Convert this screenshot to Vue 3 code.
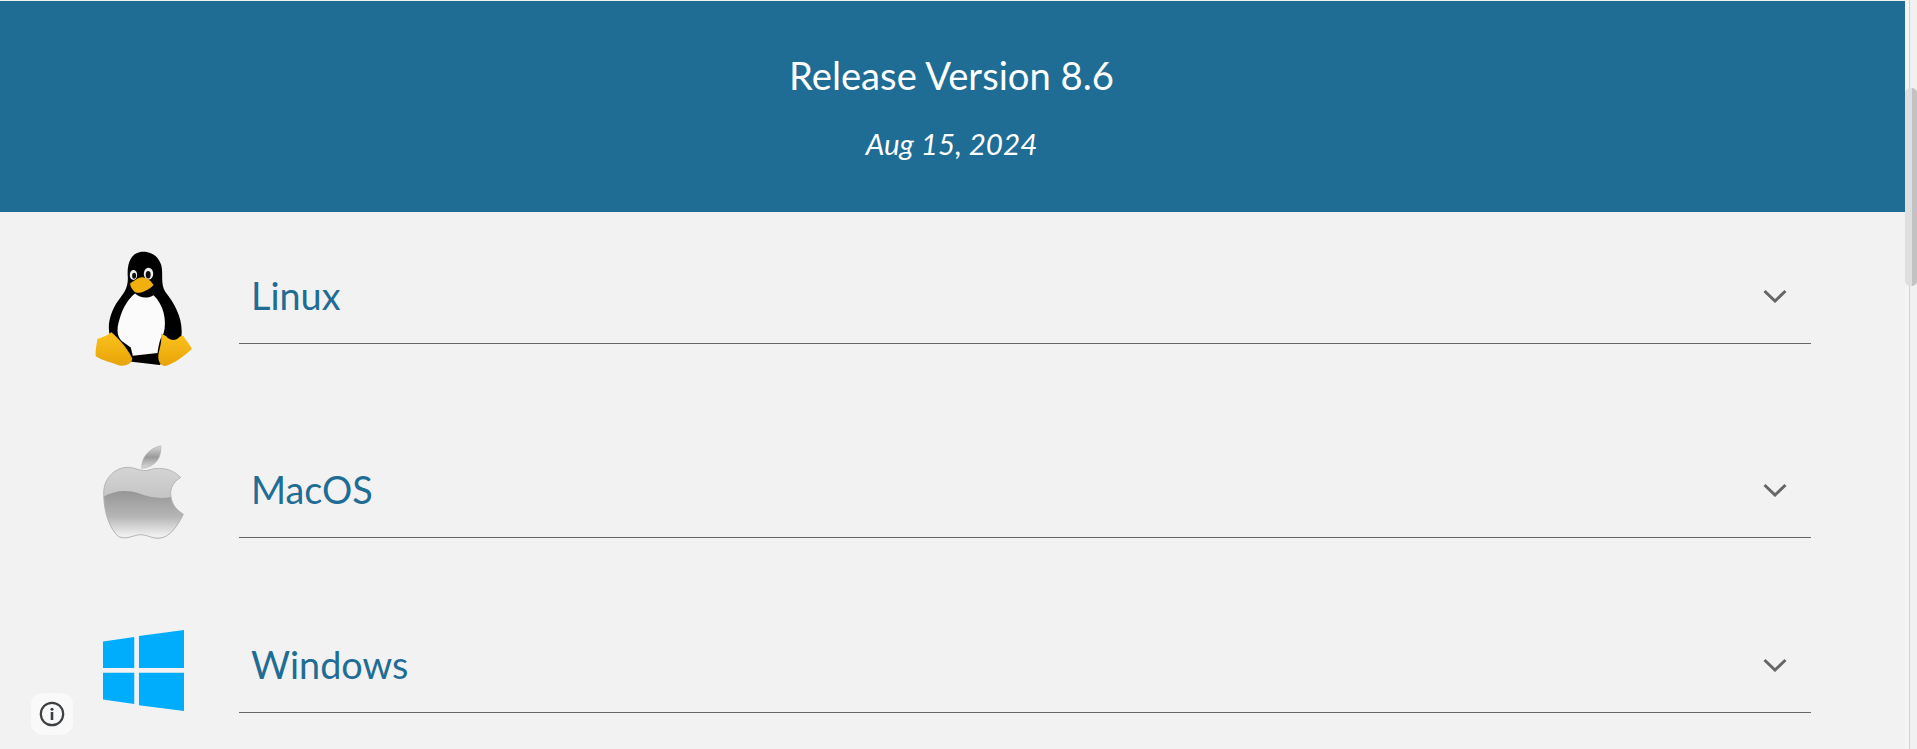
<script setup>
const rows = [
  { name: 'Linux', cls: 'linux' },
  { name: 'MacOS', cls: 'mac' },
  { name: 'Windows', cls: 'win' },
]
</script>

<template>
  <div class="viewport">
    <main class="page">
      <header class="banner">
        <h1 class="title">Release Version 8.6</h1>
        <p class="date">Aug 15, 2024</p>
      </header>

      <section v-for="row in rows" :key="row.name" class="row" :class="row.cls">
        <div class="icon-cell">
          <svg v-if="row.cls === 'linux'" class="tux" viewBox="45 60 290 350" width="97" height="117">
            <defs>
              <filter id="soft" x="-5%" y="-5%" width="110%" height="110%">
                <feGaussianBlur stdDeviation="1.6"/>
              </filter>
              <linearGradient id="foot" x1="0" y1="0" x2="0" y2="1">
                <stop offset="0" stop-color="#fbc21a"/>
                <stop offset="1" stop-color="#e8a40a"/>
              </linearGradient>
            </defs>
            <g filter="url(#soft)">
              <path d="M190 65C152 65 140 100 143 140C145 175 130 190 112 215C92 245 82 280 88 310C100 350 130 385 155 394L238 404C265 385 295 350 303 322C310 270 287 225 255 185C240 160 250 130 243 105C235 80 215 65 190 65Z" fill="#060606"/>
              <path d="M165 190C150 200 128 230 118 268C108 300 112 320 125 332L152 352L158 376L232 368C236 340 240 322 250 310C262 270 248 220 220 195C205 205 180 205 165 190Z" fill="#fbfbfb"/>
              <ellipse cx="160" cy="135" rx="11" ry="15" fill="#efefef"/>
              <ellipse cx="205" cy="131" rx="14" ry="18" fill="#efefef"/>
              <ellipse cx="162" cy="137" rx="6" ry="9" fill="#111"/>
              <ellipse cx="204" cy="134" rx="7.5" ry="11" fill="#111"/>
              <path d="M150 160C165 152 175 140 190 142C205 145 215 155 220 165C205 180 185 190 170 188C160 185 150 170 150 160Z" fill="#f0b00c"/>
              <path d="M52 326C66 322 82 316 94 306C110 320 142 352 156 384C158 400 132 410 115 405C95 396 68 392 47 378C45 362 50 342 52 326Z" fill="url(#foot)"/>
              <path d="M242 310L258 318C268 332 288 332 296 322C302 316 306 316 310 318C318 332 330 344 335 356C312 376 282 400 255 407C240 406 232 392 235 370C240 350 246 330 242 310Z" fill="url(#foot)"/>
            </g>
          </svg>

          <svg v-else-if="row.cls === 'mac'" class="apple" viewBox="68 45 244 285" width="81" height="95">
            <defs>
              <linearGradient id="appleTop" x1="0" y1="0" x2="0" y2="1">
                <stop offset="0" stop-color="#d4d4d4"/>
                <stop offset="0.45" stop-color="#c4c4c4"/>
              </linearGradient>
              <linearGradient id="appleBottom" x1="0" y1="0" x2="0" y2="1">
                <stop offset="0" stop-color="#969696"/>
                <stop offset="0.5" stop-color="#b6b6b6"/>
                <stop offset="0.85" stop-color="#efefef"/>
                <stop offset="1" stop-color="#e8e8e8"/>
              </linearGradient>
              <linearGradient id="appleLeaf" x1="0" y1="0" x2="0" y2="1">
                <stop offset="0" stop-color="#d8d8d8"/>
                <stop offset="0.5" stop-color="#9a9a9a"/>
                <stop offset="1" stop-color="#dcdcdc"/>
              </linearGradient>
              <clipPath id="appleClip">
                <path d="M70 190C70 140 110 108 150 112C170 115 185 125 205 120C230 112 270 110 302 142C280 155 270 175 272 195C275 225 290 240 310 253C295 285 270 322 240 325C215 328 200 312 175 315C150 320 135 330 115 320C90 300 70 250 70 190Z"/>
              </clipPath>
            </defs>
            <path d="M70 190C70 140 110 108 150 112C170 115 185 125 205 120C230 112 270 110 302 142C280 155 270 175 272 195C275 225 290 240 310 253C295 285 270 322 240 325C215 328 200 312 175 315C150 320 135 330 115 320C90 300 70 250 70 190Z" fill="url(#appleTop)"/>
            <path clip-path="url(#appleClip)" d="M60 205C100 180 140 178 175 190C210 203 245 208 275 200L320 200L320 340L60 340Z" fill="url(#appleBottom)"/>
            <path d="M70 190C70 140 110 108 150 112C170 115 185 125 205 120C230 112 270 110 302 142C280 155 270 175 272 195C275 225 290 240 310 253C295 285 270 322 240 325C215 328 200 312 175 315C150 320 135 330 115 320C90 300 70 250 70 190Z" fill="none" stroke="#b4b4b4" stroke-width="3"/>
            <path d="M185 115C182 85 205 55 242 47C245 85 225 110 185 115Z" fill="url(#appleLeaf)" stroke="#b0b0b0" stroke-width="2"/>
          </svg>

          <svg v-else class="windows" viewBox="310 61 241 241" width="81" height="81">
            <path d="M310 95L403 82V174H310ZM417 79L551 61V174H417ZM310 188H403V281L310 268ZM417 188H551V302L417 285Z" fill="#00adfc"/>
          </svg>
        </div>

        <div class="panel">
          <span class="label">{{ row.name }}</span>
          <svg class="chevron" viewBox="0 0 24 14" width="24" height="14">
            <path d="M1.5 2L12 12L22.5 2" fill="none" stroke="#666" stroke-width="3"/>
          </svg>
        </div>
      </section>
    </main>

    <div class="scrollbar">
      <div class="thumb"></div>
    </div>

    <button class="info" aria-label="Info">
      <svg viewBox="0 0 26 26" width="26" height="26">
        <circle cx="13" cy="13" r="11.2" fill="none" stroke="#3c4043" stroke-width="2.2"/>
        <circle cx="13" cy="8.2" r="1.5" fill="#3c4043"/>
        <rect x="11.7" y="11" width="2.6" height="8" fill="#3c4043"/>
      </svg>
    </button>
  </div>
</template>

<style>
html, body { margin: 0; overflow: hidden; }
</style>

<style scoped>
.viewport {
  position: relative;
  display: flex;
  height: 749px;
  overflow: hidden;
  background: #f2f2f2;
  font-family: Lato, "Open Sans", sans-serif;
}
.page {
  flex: 1;
  min-width: 0;
}
.banner {
  box-sizing: border-box;
  height: 211px;
  margin-top: 1px;
  padding: 51px 2px 0 0;
  background: #1f6c94;
  color: #fff;
  text-align: center;
}
.title {
  margin: 0;
  font-size: 38.2px;
  line-height: 46px;
  font-weight: 400;
}
.date {
  margin: 28px 0 0;
  font-size: 29.6px;
  line-height: 36px;
  font-style: italic;
}
.row {
  display: flex;
  align-items: flex-start;
}
.icon-cell {
  box-sizing: border-box;
  display: flex;
  align-items: flex-start;
  width: 239px;
  flex: none;
}
.linux { margin-top: 38px; height: 120px; }
.mac { margin-top: 75px; height: 96px; }
.win { margin-top: 89px; height: 80px; }
.tux { margin-left: 95px; display: block; }
.apple, .windows { margin-left: 103px; display: block; }
.panel {
  box-sizing: border-box;
  flex: 1;
  display: flex;
  align-items: center;
  justify-content: space-between;
  height: 70px;
  margin-right: 94px;
  padding: 0 12px 25px;
  border-bottom: 1px solid #666;
}
.linux .panel { margin-top: 24px; }
.mac .panel { margin-top: 23px; }
.win .panel { margin-top: 13px; }
.label {
  font-size: 37.8px;
  line-height: 46px;
  color: #1f6c94;
}
.chevron { display: block; margin-right: 12px; }
.scrollbar {
  position: relative;
  flex: none;
  width: 12px;
  background: linear-gradient(90deg, #f5f5f5 0, #f5f5f5 4px, #d2d2d2 4px, #d2d2d2 5px, #f1f1f1 5px);
}
.thumb {
  position: absolute;
  top: 88px;
  left: 0;
  width: 12px;
  height: 198px;
  border-radius: 5px;
  background: linear-gradient(90deg, #dfdfdf 0, #dfdfdf 7px, #c2c2c2 7px);
}
.info {
  position: absolute;
  left: 31px;
  top: 693px;
  display: flex;
  align-items: center;
  justify-content: center;
  width: 42px;
  height: 42px;
  padding: 0;
  border: 0;
  border-radius: 12px;
  background: #f9f9f9;
}
</style>
